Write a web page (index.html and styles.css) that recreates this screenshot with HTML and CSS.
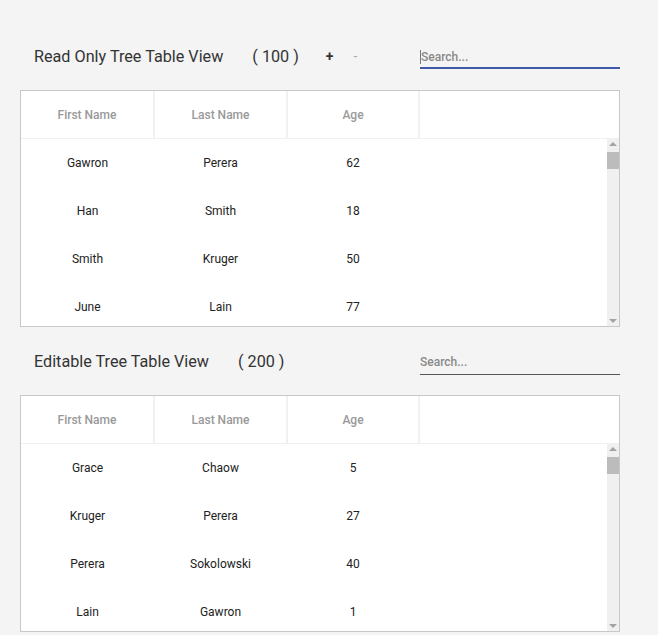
FILE: index.html
```html
<!DOCTYPE html>
<html>
<head>
<meta charset="utf-8">
<link rel="stylesheet" href="styles.css">
</head>
<body>
<div class="page">
  <section class="panel">
    <div class="bar">
      <span class="title">Read Only Tree Table View</span>
      <span class="count">( 100 )</span>
      <span class="ctrl plus">+</span>
      <span class="ctrl minus">-</span>
      <div class="search focused"><span class="caret"></span><span class="ph">Search...</span></div>
    </div>
    <div class="table">
      <div class="thead">
        <div class="th">First Name</div>
        <div class="th">Last Name</div>
        <div class="th">Age</div>
        <div class="th last"></div>
      </div>
      <div class="tbody">
        <div class="rows">
          <div class="tr"><div class="td">Gawron</div><div class="td">Perera</div><div class="td">62</div></div>
          <div class="tr"><div class="td">Han</div><div class="td">Smith</div><div class="td">18</div></div>
          <div class="tr"><div class="td">Smith</div><div class="td">Kruger</div><div class="td">50</div></div>
          <div class="tr"><div class="td">June</div><div class="td">Lain</div><div class="td">77</div></div>
        </div>
        <div class="scroll"><span class="up"></span><span class="thumb"></span><span class="fill"></span><span class="down"></span></div>
      </div>
    </div>
  </section>
  <section class="panel">
    <div class="bar">
      <span class="title">Editable Tree Table View</span>
      <span class="count two">( 200 )</span>
      <div class="search"><span class="ph">Search...</span></div>
    </div>
    <div class="table">
      <div class="thead">
        <div class="th">First Name</div>
        <div class="th">Last Name</div>
        <div class="th">Age</div>
        <div class="th last"></div>
      </div>
      <div class="tbody">
        <div class="rows">
          <div class="tr"><div class="td">Grace</div><div class="td">Chaow</div><div class="td">5</div></div>
          <div class="tr"><div class="td">Kruger</div><div class="td">Perera</div><div class="td">27</div></div>
          <div class="tr"><div class="td">Perera</div><div class="td">Sokolowski</div><div class="td">40</div></div>
          <div class="tr"><div class="td">Lain</div><div class="td">Gawron</div><div class="td">1</div></div>
        </div>
        <div class="scroll"><span class="up"></span><span class="thumb"></span><span class="fill"></span><span class="down"></span></div>
      </div>
    </div>
  </section>
</div>
</body>
</html>
```

FILE: styles.css
```css
html, body {
  margin: 0;
  padding: 0;
  background: #f4f4f4;
  font-family: Roboto, "Liberation Sans", sans-serif;
  color: #333;
}
.page {
  padding: 22px 38px 0 20px;
  width: 600px;
}
.panel {
  display: flex;
  flex-direction: column;
}
.bar {
  height: 68px;
  display: flex;
  align-items: center;
}
.title {
  font-size: 16.2px;
  margin-left: 14px;
  color: #333;
}
.count {
  font-size: 16.2px;
  margin-left: 29px;
  color: #333;
}
.count.two {
  margin-left: 29px;
}
.ctrl {
  font-size: 14px;
  font-weight: bold;
  color: #333;
}
.plus { margin-left: 27px; }
.minus { margin-left: 20px; color: #aaa; font-weight: normal; }
.search {
  margin-left: auto;
  width: 200px;
  box-sizing: border-box;
  display: flex;
  align-items: center;
  align-self: flex-start;
  margin-top: 22px;
  height: 26px;
  border-bottom: 1px solid #555;
}
.search.focused {
  border-bottom: 2px solid #4059a9;
  margin-top: 25px;
  height: 22px;
}
.caret {
  width: 1px;
  height: 14px;
  background: #777;
}
.ph {
  font-size: 12px;
  font-weight: 500;
  color: #8a8a8a;
}
.table {
  border: 1px solid #c8c8c8;
  background: #fff;
  height: 235px;
  display: flex;
  flex-direction: column;
}
.thead {
  display: grid;
  grid-template-columns: 134px 133px 132px 1fr;
  height: 47px;
  border-bottom: 1px solid #f0f0f0;
}
.th {
  display: flex;
  align-items: center;
  justify-content: center;
  font-size: 12px;
  font-weight: 500;
  color: #999;
  border-right: 2px solid #f1f1f1;
}
.th.last { border-right: none; }
.tbody {
  display: flex;
  flex: 1;
  overflow: hidden;
}
.rows {
  flex: 1;
  overflow: hidden;
}
.tr {
  display: grid;
  grid-template-columns: 133px 133px 132px;
  height: 48px;
}
.td {
  display: flex;
  align-items: center;
  justify-content: center;
  font-size: 12px;
  color: #222;
}
.scroll {
  width: 12px;
  background: #f0f0f0;
  display: flex;
  flex-direction: column;
  align-items: center;
}
.up, .down {
  width: 0;
  height: 0;
  border-left: 4px solid transparent;
  border-right: 4px solid transparent;
}
.up {
  border-bottom: 4px solid #a3a3a3;
  margin-top: 3px;
}
.down {
  border-top: 4px solid #a3a3a3;
  margin-bottom: 3px;
}
.thumb {
  width: 12px;
  height: 17px;
  background: #bcbcbc;
  margin-top: 6px;
}
.fill { flex: 1; }
```
